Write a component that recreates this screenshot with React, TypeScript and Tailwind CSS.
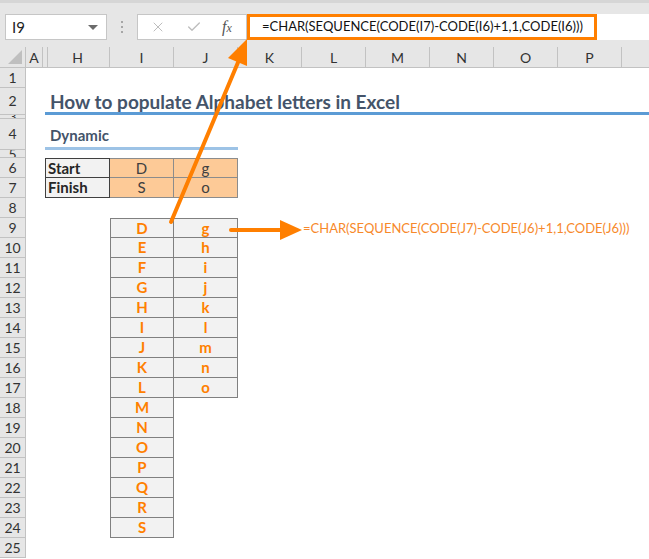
import React from 'react';
import { X, Check } from 'lucide-react';

const grid = "grid grid-rows-1 grid-cols-[26px_19px_65px_64px_64px_64px_64px_64px_64px_64px_64px_1fr]";
const font = { fontFamily: 'Lato, "Open Sans", sans-serif' };

const upper = 'DEFGHIJKLMNOPQRS'.split('');
const lower = 'ghijklmno'.split('');

const rowHeights: Record<number, string> = {
  1: 'h-[20px]', 2: 'h-[27px]', 3: 'h-[4px]', 4: 'h-[31px]', 5: 'h-[8px]',
};

const RowHeader = ({ n }: { n: number }) => (
  <div className="flex items-center justify-center overflow-hidden bg-[#e6e6e6] border-r border-b border-[#c2c2c2] text-[14px] text-[#333] leading-none">
    {n}
  </div>
);

const App = () => {
  const rows = Array.from({ length: 25 }, (_, i) => i + 1);

  const renderCells = (n: number) => {
    if (n === 2) {
      return (
        <div className="col-start-3 col-span-10 flex items-end pl-[5px] pb-[1px] border-b-[3px] border-[#5b9bd5]">
          <span className="text-[19px] font-bold text-[#44546a] leading-none">How to populate Alphabet letters in Excel</span>
        </div>
      );
    }
    if (n === 4) {
      return (
        <div className="col-start-3 col-span-3 flex items-end pl-[5px] pb-[4px] border-b-[3px] border-[#9dc3e6]">
          <span className="text-[15px] font-bold text-[#44546a] leading-none">Dynamic</span>
        </div>
      );
    }
    if (n === 6 || n === 7) {
      const top = n === 6 ? 'border-t' : '';
      return (
        <>
          <div className={`col-start-3 flex items-center pl-[2px] bg-[#f2f2f2] border-l border-r border-b border-[#404040] ${top} text-[15px] leading-none font-bold text-[#262626]`}>
            {n === 6 ? 'Start' : 'Finish'}
          </div>
          <div className={`flex items-center justify-center bg-[#fdca97] border-r border-b border-[#8c8c8c] ${top} text-[15px] leading-none text-[#404040]`}>
            {n === 6 ? 'D' : 'S'}
          </div>
          <div className={`flex items-center justify-center bg-[#fdca97] border-r border-b border-[#8c8c8c] ${top} text-[15px] leading-none text-[#404040]`}>
            {n === 6 ? 'g' : 'o'}
          </div>
        </>
      );
    }
    if (n >= 9 && n <= 24) {
      const top = n === 9 ? 'border-t' : '';
      const lo = lower[n - 9];
      return (
        <>
          <div className={`col-start-4 flex items-center justify-center bg-[#f2f2f2] border-l border-r border-b border-[#808080] ${top} text-[15px] leading-none font-bold text-[#ff8000]`}>
            {upper[n - 9]}
          </div>
          {lo && (
            <div className={`flex items-center justify-center bg-[#f2f2f2] border-r border-b border-[#808080] ${top} text-[15px] leading-none font-bold text-[#ff8000]`}>
              {lo}
            </div>
          )}
          {n === 9 && (
            <div className="col-start-7 col-span-6 flex items-center pl-[1px] whitespace-nowrap text-[13px] leading-none text-[#f7892b]">
              =CHAR(SEQUENCE(CODE(J7)-CODE(J6)+1,1,CODE(J6)))
            </div>
          )}
        </>
      );
    }
    return null;
  };

  return (
    <div className="relative w-[649px] h-[559px] overflow-hidden bg-white" style={font}>
      {/* formula bar */}
      <div className="h-[47px] flex items-start pt-[11px] pl-[5px] bg-[#e6e6e6] border-t-[3px] border-[#d6d6d6]">
        <div className="w-[102px] h-[26px] flex items-center justify-between px-[6px] bg-white border border-[#c6c6c6]">
          <span className="text-[15px] text-[#222]">I9</span>
          <span className="w-0 h-0 border-l-[5px] border-r-[5px] border-t-[5px] border-l-transparent border-r-transparent border-t-[#6b6b6b] mr-[2px]" />
        </div>
        <div className="w-[30px] h-[26px] flex flex-col items-center justify-center gap-[3px]">
          <span className="w-[2px] h-[2px] bg-[#a6a6a6]" />
          <span className="w-[2px] h-[2px] bg-[#a6a6a6]" />
          <span className="w-[2px] h-[2px] bg-[#a6a6a6]" />
        </div>
        <div className="w-[110px] h-[26px] flex items-center bg-white border border-[#c6c6c6] pl-[12px]">
          <X size={16} strokeWidth={1.5} className="text-[#bdbdbd]" />
          <Check size={16} strokeWidth={2} className="text-[#bdbdbd] ml-[20px]" />
          <span className="ml-[20px] italic text-[#555] text-[16px] leading-none" style={{ fontFamily: '"Liberation Serif", serif' }}>
            f<span className="text-[12px]">x</span>
          </span>
        </div>
        <div className="flex-1 h-[26px] bg-white">
          <div className="w-[350px] h-[26px] flex items-center pl-[12px] border-[3px] border-[#ff7f00] text-[13px] text-[#111] whitespace-nowrap">
            =CHAR(SEQUENCE(CODE(I7)-CODE(I6)+1,1,CODE(I6)))
          </div>
        </div>
      </div>

      {/* column headers */}
      <div className={`${grid} h-[21px] bg-[#e6e6e6] border-b border-[#c2c2c2] text-[14px] text-[#333]`}>
        <div className="relative border-r border-[#c2c2c2]">
          <svg className="absolute right-[3px] bottom-[3px]" width="14" height="14"><polygon points="14,0 14,14 0,14" fill="#bfbfbf" /></svg>
        </div>
        <div className="flex">
          <div className="w-[17px] flex items-center justify-center border-r border-[#c2c2c2]">A</div>
        </div>
        <div className="flex">
          <div className="w-[2px]" />
          <div className="flex-1 flex items-center justify-center border-l border-r border-[#c2c2c2] pr-[2px]">H</div>
        </div>
        {['I', 'J', 'K', 'L', 'M', 'N', 'O', 'P'].map((c) => (
          <div key={c} className="flex items-center justify-center border-r border-[#c2c2c2]">{c}</div>
        ))}
        <div />
      </div>

      {/* sheet */}
      {rows.map((n) => (
        <div key={n} className={`${grid} ${rowHeights[n] ?? 'h-[20px]'}`}>
          <RowHeader n={n} />
          {renderCells(n)}
        </div>
      ))}

      {/* arrows */}
      <svg className="absolute top-0 left-0 pointer-events-none" width="649" height="559">
        <line x1="231" y1="230" x2="284" y2="230" stroke="#ff7f00" strokeWidth="4" strokeLinecap="round" />
        <polygon points="280,220 302,230 280,240" fill="#ff7f00" />
        <line x1="171" y1="222" x2="239" y2="60" stroke="#ff7f00" strokeWidth="4" strokeLinecap="round" />
        <polygon points="247,39 247,66 228,58" fill="#ff7f00" />
      </svg>
    </div>
  );
};

export default App;
